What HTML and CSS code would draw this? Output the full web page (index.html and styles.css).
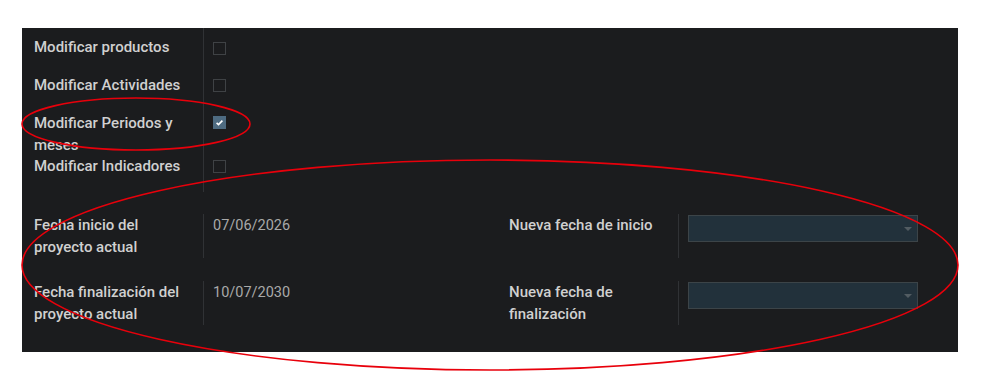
FILE: index.html
```html
<!DOCTYPE html>
<html lang="es">

<head>
    <meta charset="UTF-8" />
    <meta name="viewport" content="width=device-width, initial-scale=1.0" />
    <title>Modificar proyecto</title>
    <link rel="stylesheet" href="styles.css">
</head>

<body>
    <div class="sheet">
        <!-- permisos -->
        <div class="checks">
            <div class="row r1">
                <div class="label">Modificar productos</div>
                <div class="value"><span class="checkbox"></span></div>
            </div>
            <div class="row r2">
                <div class="label">Modificar Actividades</div>
                <div class="value"><span class="checkbox"></span></div>
            </div>
            <div class="row r3">
                <div class="label">Modificar Periodos y meses</div>
                <div class="value"><span class="checkbox checked">
                    <svg viewBox="0 0 13 13" width="13" height="13"><path d="M3.6 6.8 L5.5 8.6 L9.4 4.6" fill="none" stroke="#fff" stroke-width="1.6"/></svg>
                </span></div>
            </div>
            <div class="row r4">
                <div class="label">Modificar Indicadores</div>
                <div class="value"><span class="checkbox"></span></div>
            </div>
        </div>

        <!-- fechas -->
        <div class="dates">
            <div class="group">
                <div class="drow">
                    <div class="label">Fecha inicio del proyecto actual</div>
                    <div class="value date">07/06/2026</div>
                </div>
                <div class="drow">
                    <div class="label">Fecha finalización del proyecto actual</div>
                    <div class="value date">10/07/2030</div>
                </div>
            </div>
            <div class="group">
                <div class="drow">
                    <div class="label">Nueva fecha de inicio</div>
                    <div class="value"><div class="select"><span class="caret"></span></div></div>
                </div>
                <div class="drow">
                    <div class="label">Nueva fecha de finalización</div>
                    <div class="value"><div class="select"><span class="caret"></span></div></div>
                </div>
            </div>
        </div>
    </div>

    <!-- marcas en rojo -->
    <svg class="marks" width="987" height="379" viewBox="0 0 987 379">
        <ellipse cx="136" cy="124" rx="114" ry="26" fill="none" stroke="#e8000b" stroke-width="1.6"/>
        <ellipse cx="490" cy="265" rx="468" ry="105" fill="none" stroke="#e8000b" stroke-width="1.6"/>
    </svg>
</body>

</html>
```

FILE: styles.css
```css
html {
    min-height: 379px;
}

body {
    margin: 0;
    min-height: 379px;
    padding: 28px 29px 0 22px;
    box-sizing: border-box;
    background: #fff;
    font-family: Roboto, "Liberation Sans", sans-serif;
    font-size: 15px;
    font-weight: 500;
    line-height: 22px;
    position: relative;
}

.sheet {
    width: 936px;
    height: 324px;
    background: #1b1c1e;
    box-sizing: border-box;
    padding-left: 12px;
}

.row,
.drow {
    display: grid;
    grid-template-columns: 169px 1fr;
}

.label {
    color: #d0d0d0;
    padding-right: 8px;
}

.row .label {
    padding-top: 8px;
}

.value {
    border-left: 1px solid #303235;
    padding-left: 9px;
}

.checks {
    width: 300px;
}

.row .value {
    box-sizing: border-box;
    padding-top: 13px;
}

.r1 { height: 38px; }
.r2 { height: 38px; }
.r3 { height: 43px; }
.r4 { height: 45px; }

.r2 .value,
.r4 .value { padding-top: 13px; }
.r1 .value { padding-top: 14px; }
.r3 .value { padding-top: 12px; }

.checkbox {
    display: block;
    width: 13px;
    height: 13px;
    box-sizing: border-box;
    border: 1px solid #3f4245;
}

.checkbox.checked {
    border: none;
    background: #4e6b81;
}

.checkbox svg {
    display: block;
}

.dates {
    display: grid;
    grid-template-columns: 475px 1fr;
    padding-top: 22px;
}

.group {
    display: flex;
    flex-direction: column;
    gap: 23px;
}

.drow {
    height: 44px;
}

.date {
    color: #a9a9a9;
    font-weight: 400;
    font-size: 14.5px;
}

.drow .value {
    padding-top: 1px;
}

.select {
    position: relative;
    width: 230px;
    height: 27px;
    box-sizing: border-box;
    background: #22313b;
    border: 1px solid #3c4448;
}

.caret {
    position: absolute;
    right: 5px;
    top: 11px;
    width: 0;
    height: 0;
    border-left: 4px solid transparent;
    border-right: 4px solid transparent;
    border-top: 4px solid #525c62;
}

.marks {
    position: absolute;
    left: 0;
    top: 0;
    overflow: visible;
    pointer-events: none;
}
```
